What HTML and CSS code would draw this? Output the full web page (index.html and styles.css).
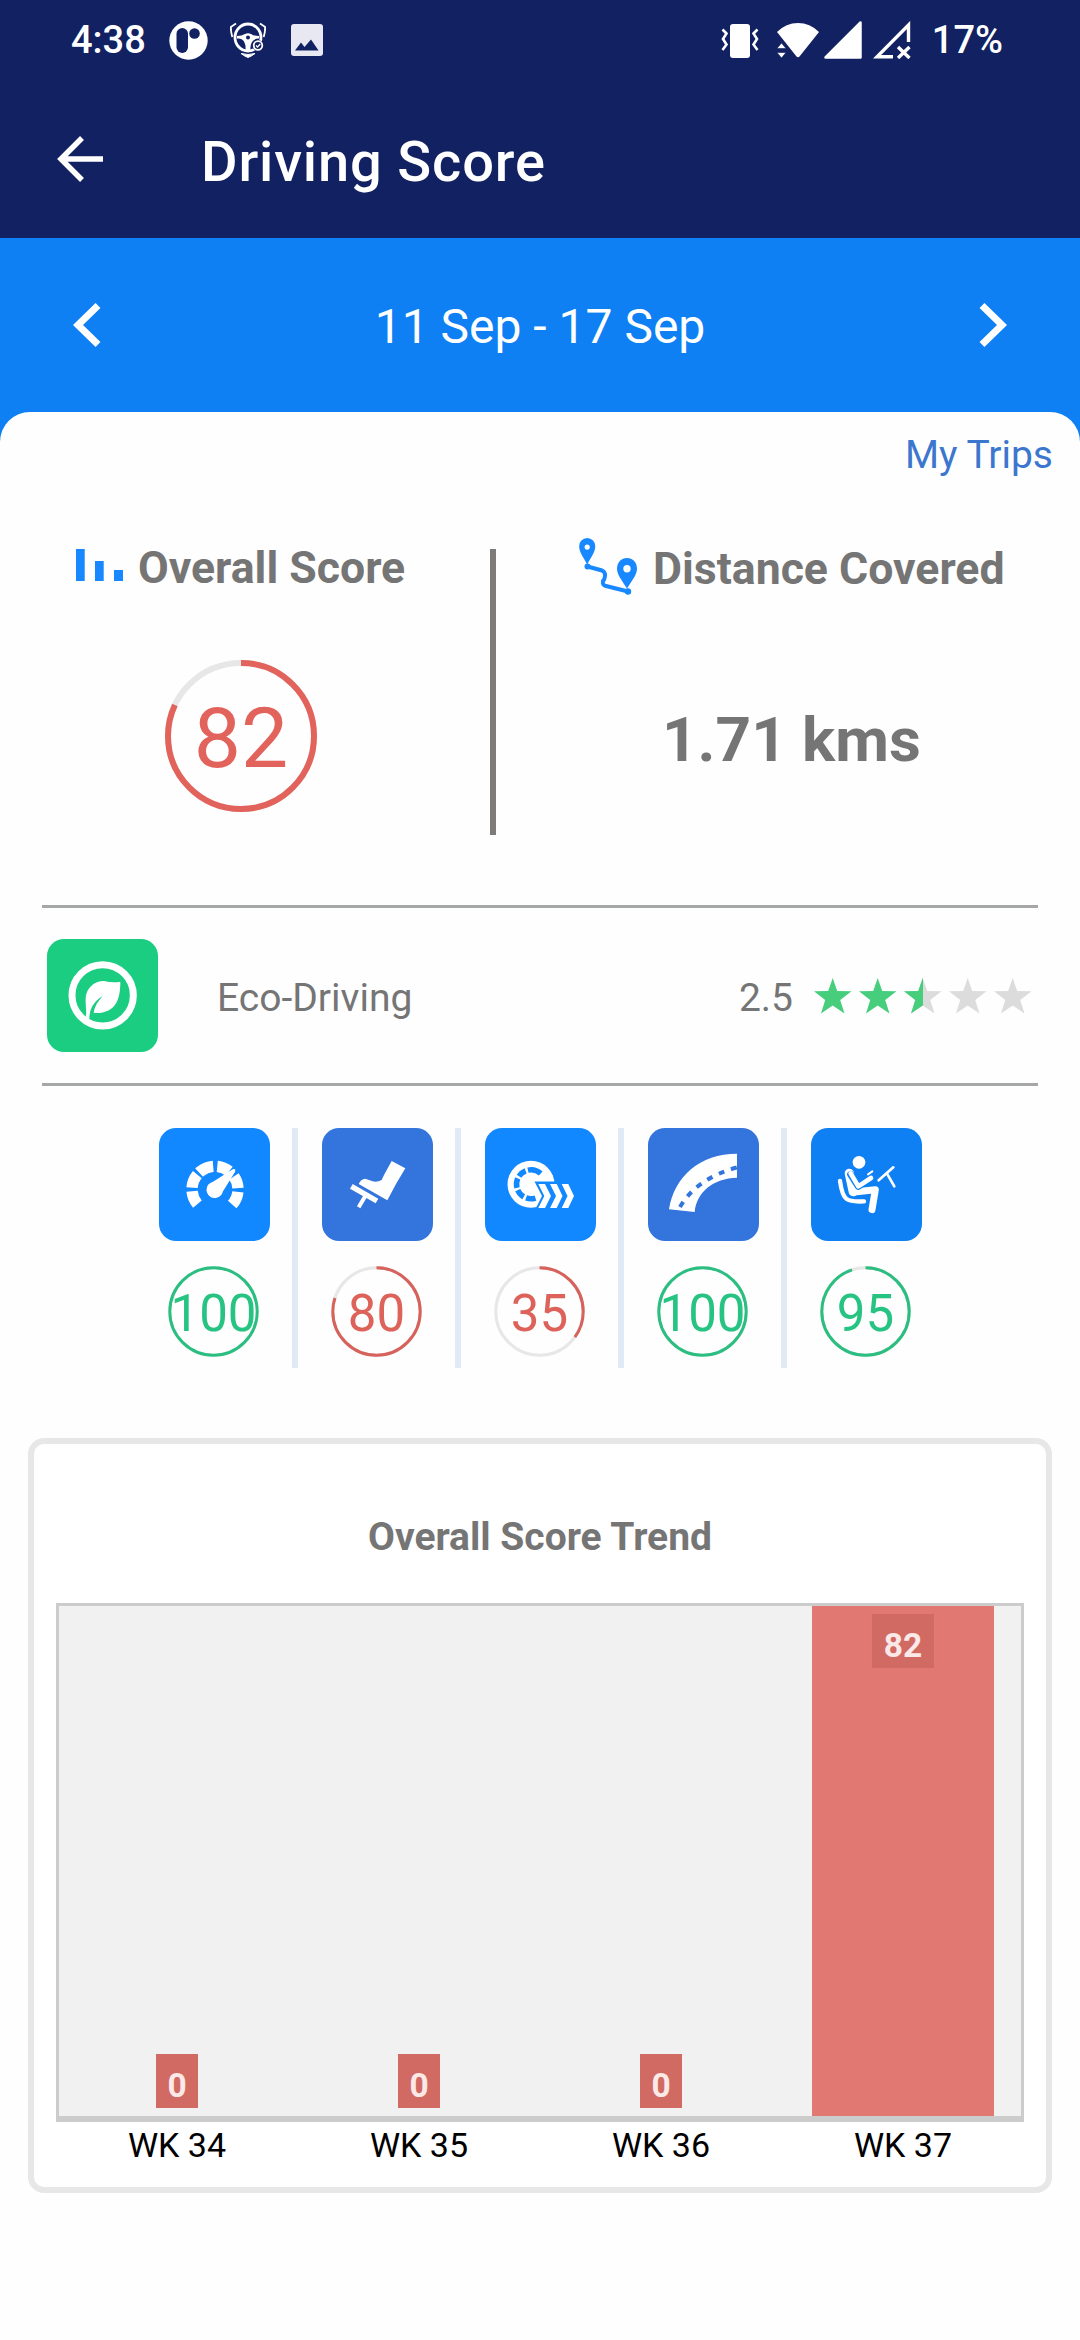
FILE: index.html
```html
<!DOCTYPE html>
<html lang="en">
<head>
<meta charset="utf-8">
<title>Driving Score</title>
<link rel="stylesheet" href="styles.css">
</head>
<body>
<header class="top">
  <div class="status">
    <span class="clock">4:38</span>
    <svg class="st-app" width="39" height="39" viewBox="0 0 39 39"><circle cx="19.5" cy="19.5" r="19.2" fill="#fff"/><rect x="7.5" y="7" width="11.5" height="25" rx="5.75" fill="#122161"/><circle cx="25.5" cy="12.5" r="5.3" fill="#122161"/></svg>
    <svg class="st-shield" width="36" height="36" viewBox="0 0 36 36" fill="none" stroke="#fff"><path d="M6 1.500 0.800 5q0 5 1.500 10M30 1.500 35.200 5q0 5-1.500 10" stroke-width="1.800"/><path d="M11 31.500q4 3 7 4 3-1 7-4-7 2-14 0z" fill="#fff" stroke-width="1"/><ellipse cx="18" cy="15.500" rx="13" ry="13.500" stroke-width="2.800"/><path d="M7 14Q12 14 15 12q3-1.500 6 0 3 2 8 2v2.500q-5 0-7 3.500T20.500 28h-5Q16 23 14 19.500T7 16.500z" fill="#fff" stroke="none"/><circle cx="18" cy="15.500" r="2" fill="#122161" stroke="none"/><circle cx="28" cy="23.500" r="5.500" fill="#122161" stroke="none"/><circle cx="28" cy="23.500" r="4.300" stroke-width="1.800"/><path d="m26 23.500 1.500 1.500 2.800-3" stroke-width="1.300"/></svg>
    <svg class="st-image" width="32" height="32" viewBox="0 0 32 32"><rect width="32" height="32" rx="3" fill="#e8e8f3"/><path d="M4 26.500 10 18.500l3.500 4.500 6.500-7.500 7.500 11z" fill="#122161"/></svg>
    <span class="status-gap"></span>
    <svg class="st-vib" width="38" height="34" viewBox="0 0 38 34"><rect x="9" width="20" height="34" rx="3" fill="#fff"/><path d="M1.500 5.500 5.500 9.500 2 15 5.500 20.500 1.500 26M36.500 5.500 32.500 9.500 36 15 32.500 20.500 36.500 26" fill="none" stroke="#fff" stroke-width="2.600"/></svg>
    <svg class="st-wifi" width="42" height="35" viewBox="0 0 42 35" fill="#fff"><path d="M0 9Q9 0 21 0t21 9L22.500 33.500q-1.500 1.500-3 0L8 19z"/><path d="M0 25.500 4.500 20 9 25.500zM0 29.500h9L4.500 35z" stroke="#122161" stroke-width=".6"/></svg>
    <svg class="st-sig" width="38" height="38" viewBox="0 0 38 38"><path d="M1.500 36.500 36.500 1.500v35z" fill="#fff" stroke="#fff" stroke-width="2.500" stroke-linejoin="round"/></svg>
    <svg class="st-sigx" width="38" height="38" viewBox="0 0 38 38" fill="none" stroke="#fff" stroke-width="3.400"><path d="M20 35.800H4L35.500 4v17M25 26 36.500 37M36.500 26 25 37"/></svg>
    <span class="battery">17%</span>
  </div>
  <div class="appbar">
    <svg class="back" width="46" height="46" viewBox="0 0 46 46" fill="none" stroke="#fff" stroke-width="5.500"><path d="M25 2 4 23l21 21M4 23h42"/></svg>
    <h1 class="title">Driving Score</h1>
  </div>
</header>

<section class="week">
  <svg width="28" height="44" viewBox="0 0 28 44" fill="none" stroke="#fff" stroke-width="7"><path d="M25 2.500 5 22l20 19.500"/></svg>
  <span class="range">11 Sep - 17 Sep</span>
  <svg width="28" height="44" viewBox="0 0 28 44" fill="none" stroke="#fff" stroke-width="7"><path d="M3 2.500 23 22 3 41.500"/></svg>
</section>

<main class="sheet">
  <a class="trips">My Trips</a>

  <section class="summary">
    <div class="overall">
      <h2 class="heading">
        <svg class="bars" width="47" height="32" viewBox="0 0 47 32" fill="#1788ff"><path d="M0 0h8.700v32H0zM19 12h8.700v20H19zM38 21h9v11h-9z"/></svg>
        Overall Score
      </h2>
      <div class="ring ring-big">
        <svg width="152" height="152" viewBox="0 0 152 152"><circle cx="76" cy="76" r="73" class="track"/><circle cx="76" cy="76" r="73" pathLength="100" stroke-dasharray="82 18" class="arc red"/></svg>
        <span class="ring-num">82</span>
      </div>
    </div>
    <div class="vline"></div>
    <div class="distance">
      <h2 class="heading heading-r">
        <svg class="route" width="59" height="57" viewBox="0 0 59 57" fill="#1788ff"><path fill-rule="evenodd" d="M8.200 0a8 8 0 0 1 8 8.500c0 5-3 9-8 18-5-9-8-13-8-18a8 8 0 0 1 8-8.500zm0 6.500a2.600 2.600 0 1 0 0 5.200 2.600 2.600 0 0 0 0-5.200zM48 20a10 10 0 0 1 10 10.500c0 6-4 10.500-10 20-6-9.500-10-14-10-20A10 10 0 0 1 48 20zm0 7a3.700 3.700 0 1 0 0 7.400 3.700 3.700 0 0 0 0-7.400z"/><circle cx="8.500" cy="28.500" r="3"/><circle cx="49" cy="53.500" r="3.200"/><path d="M8.500 28.500 23 32.500Q26.500 34 26 38T24 43q-1 4 3 5L49 53.500" fill="none" stroke="#1788ff" stroke-width="4"/></svg>
        Distance Covered
      </h2>
      <p class="kms">1.71 kms</p>
    </div>
  </section>

  <section class="eco">
    <svg class="tile" viewBox="81 147 333 339"><rect x="81" y="147" width="333" height="339" rx="51" fill="#1acd81"/><circle cx="248" cy="316" r="92" fill="none" stroke="#fff" stroke-width="21"/><path d="M301 275C301 325 290 372 221 369 224 348 234 334 248 318 220 335 207 358 208 392L197 384C201 365 196 350 197 325 198 295 222 273 252 273Q278 279 301 275z" fill="#fff"/></svg>
    <span class="eco-name">Eco-Driving</span>
    <span class="eco-value">2.5</span>
    <svg class="stars" width="218" height="36" viewBox="0 0 218 36">
      <defs><path id="star" d="M18.700 0 23.200 13 37.500 13.300 26.200 22 30.500 35.500 18.700 27.500 7 35.500 11.200 22 0 13.300 14.200 13z"/><clipPath id="half"><rect width="19" height="36"/></clipPath></defs>
      <g fill="#46ce7d"><use href="#star"/><use href="#star" x="45"/></g>
      <g fill="#dcdcdc"><use href="#star" x="90"/><use href="#star" x="135"/><use href="#star" x="180"/></g>
      <g transform="translate(90 0)" fill="#46ce7d"><use href="#star" clip-path="url(#half)"/></g>
    </svg>
  </section>

  <section class="metrics">
    <div class="metric">
      <svg class="tile" viewBox="57 54 333 339"><rect x="57" y="54" width="333" height="339" rx="51" fill="#1188ff"/><circle cx="225" cy="238" r="69" pathLength="360" fill="none" stroke="#fff" stroke-width="34" stroke-dasharray="35 9 35 7 39 10 32 18 31 9 35 100" transform="rotate(-220 225 238)"/><path d="M276 179q5-4 9-1 2 3 0 8l-36 58a25 25 0 1 1-30-29z" fill="#fff"/></svg>
      <div class="ring"><svg width="91" height="91" viewBox="0 0 91 91"><circle cx="45.500" cy="45.500" r="43.700" class="arc green"/></svg><span class="ring-num green-t">100</span></div>
    </div>
    <div class="sep"></div>
    <div class="metric">
      <svg class="tile" viewBox="546 54 333 339"><rect x="546" y="54" width="333" height="339" rx="51" fill="#3375dc"/><path d="M755 153 796 175 768 222 742 271 656 222Q662 207 676 206L698 214Q712 217 725 210L732 195z" fill="#fff"/><path d="M634 229 711 273" stroke="#fff" stroke-width="16"/><path d="M676 258 656 292" stroke="#fff" stroke-width="12"/></svg>
      <div class="ring"><svg width="91" height="91" viewBox="0 0 91 91"><circle cx="45.500" cy="45.500" r="43.700" class="track"/><circle cx="45.500" cy="45.500" r="43.700" pathLength="100" stroke-dasharray="80 20" class="arc red2"/></svg><span class="ring-num red2-t">80</span></div>
    </div>
    <div class="sep"></div>
    <div class="metric">
      <svg class="tile" viewBox="0 0 111 113"><rect width="111" height="113" rx="17" fill="#1188ff"/><circle cx="46" cy="56.300" r="23.500" fill="#fff"/><circle cx="46" cy="56.300" r="14.500" fill="none" stroke="#1188ff" stroke-width="5.500" pathLength="360" stroke-dasharray="38 10 36 10 38 10 34 10 54 120" transform="rotate(72 46 56.300)"/><path d="M49.500 53.500H72V82H50L57 68z" fill="#1188ff"/><g fill="#fff"><path d="M53.300 56H60L66 68 60 80H53.300L59.300 68zM65 56H71.700L77.500 68 71.700 80H65L71 68zM76.700 56H83.300L89 68 83.300 80H76.700L82.500 68z"/></g></svg>
      <div class="ring"><svg width="91" height="91" viewBox="0 0 91 91"><circle cx="45.500" cy="45.500" r="43.700" class="track"/><circle cx="45.500" cy="45.500" r="43.700" pathLength="100" stroke-dasharray="35 65" class="arc red2"/></svg><span class="ring-num red2-t">35</span></div>
    </div>
    <div class="sep"></div>
    <div class="metric">
      <svg class="tile" viewBox="354 54 333 339"><rect x="354" y="54" width="333" height="339" rx="51" fill="#3375dc"/><path d="M417 298C432 200 510 131 621 131V203C550 205 500 245 494 306z" fill="#fff"/><path d="M450 291Q500 205 622 172" fill="none" stroke="#3375dc" stroke-width="12" stroke-dasharray="18 21"/></svg>
      <div class="ring"><svg width="91" height="91" viewBox="0 0 91 91"><circle cx="45.500" cy="45.500" r="43.700" class="arc green"/></svg><span class="ring-num green-t">100</span></div>
    </div>
    <div class="sep"></div>
    <div class="metric">
      <svg class="tile" viewBox="843 54 333 339"><rect x="843" y="54" width="333" height="339" rx="51" fill="#0e80f4"/><circle cx="987" cy="157" r="19" fill="#fff"/><g fill="none" stroke="#fff" stroke-linecap="round" stroke-linejoin="round"><path d="M930 213C938 272 950 277 1002 274" stroke-width="13"/><path d="M958 190 970 245" stroke-width="28"/><path d="M972 246 1036 239 1026 299" stroke-width="21"/><path d="M962 193 985 229 1023 204" stroke="#0e80f4" stroke-width="21"/><path d="M962 190 985 229 1023 204" stroke-width="14"/><path d="M1014 193 1027 184" stroke-width="6"/><path d="M1046 211 1090 172M1071 191 1093 229" stroke-width="8"/></g></svg>
      <div class="ring"><svg width="91" height="91" viewBox="0 0 91 91"><circle cx="45.500" cy="45.500" r="43.700" class="track"/><circle cx="45.500" cy="45.500" r="43.700" pathLength="100" stroke-dasharray="95 5" class="arc green"/></svg><span class="ring-num green-t">95</span></div>
    </div>
  </section>

  <section class="trend">
    <h3 class="trend-title">Overall Score Trend</h3>
    <div class="plot">
      <div class="col"><span class="tag">0</span></div>
      <div class="col"><span class="tag">0</span></div>
      <div class="col"><span class="tag">0</span></div>
      <div class="col"><div class="bar"><span class="tag tag-in">82</span></div></div>
    </div>
    <div class="weeks"><span>WK 34</span><span>WK 35</span><span>WK 36</span><span>WK 37</span></div>
  </section>
</main>
</body>
</html>
```
FILE: styles.css
```css
* { box-sizing: border-box; }
body {
  margin: 0;
  width: 1080px;
  height: 2340px;
  overflow: hidden;
  background: #0e80f4;
  font-family: Roboto, "Liberation Sans", sans-serif;
  color: #757575;
}
svg { display: block; flex: none; }
h1, h2, h3, p { margin: 0; }

.top { height: 238px; background: #122161; color: #fff; }
.status {
  display: flex;
  align-items: center;
  height: 80px;
  padding: 0 77px 0 71px;
  font-size: 38px;
  font-weight: 500;
}
.clock { width: 98px; white-space: nowrap; }
.st-app { margin-right: 22px; }
.st-shield { margin-right: 25px; }
.status-gap { flex: 1; }
.st-vib { margin: 2px 18px 0 0; }
.st-wifi { margin-right: 5px; }
.st-sig { margin-right: 11px; }
.st-sigx { margin-right: 21px; }
.appbar {
  display: flex;
  align-items: center;
  height: 158px;
  padding: 0 57px;
}
.back { margin-right: 98px; }
.title { font-size: 56px; font-weight: 500; line-height: 158px; letter-spacing: 0.85px; padding-top: 5px; white-space: nowrap; }

.week {
  display: flex;
  align-items: center;
  justify-content: space-between;
  height: 174px;
  padding: 0 73px;
  color: #fff;
}
.range { font-size: 48px; line-height: 60px; padding-top: 3px; }

.sheet {
  height: 1928px;
  border-radius: 30px 30px 0 0;
  background: #fefefe;
}
.trips {
  display: block;
  height: 137px;
  padding: 20px 27px 0 0;
  text-align: right;
  font-size: 39px;
  line-height: 46px;
  color: #3b76cf;
}

.summary { display: flex; height: 356px; }
.overall { width: 490px; padding-left: 76px; }
.heading { display: flex; align-items: flex-start; height: 111px; font-size: 44.6px; line-height: 38px; font-weight: 700; white-space: nowrap; }
.bars { margin-right: 15px; }
.vline { width: 6px; height: 286px; background: #7f7b7b; }
.distance { padding-left: 83px; }
.heading-r { line-height: 40px; }
.route { margin: -11px 15px 0 0; }
.kms { padding: 43px 0 0 83px; font-size: 62px; line-height: 74px; font-weight: 700; white-space: nowrap; }

.ring { display: grid; width: 91px; height: 91px; place-items: center; }
.ring > * { grid-area: 1 / 1; }
.ring-num { font-size: 51px; line-height: 60px; white-space: nowrap; padding-top: 5px; }
.ring-big { width: 152px; height: 152px; margin-left: 89px; }
.ring-big .ring-num { font-size: 84px; line-height: 100px; padding-top: 6px; color: #e2635b; }
.ring circle { fill: none; stroke-width: 3; }
.ring-big circle { stroke-width: 6; }
.ring .track { stroke: #e7e7e7; }
.arc { transform: rotate(-90deg); transform-origin: center; }
.ring .red { stroke: #e2635b; }
.ring .red2 { stroke: #d7625c; }
.ring .green { stroke: #2cbd80; }
.red2-t { color: #dc625a; }
.green-t { color: #26c382; }

.eco {
  display: flex;
  align-items: center;
  height: 181px;
  margin: 0 42px;
  padding: 0 6px 0 5px;
  border: solid #a6a8a8;
  border-width: 3px 0;
  font-size: 39px;
}
.tile { width: 111px; height: 113px; }
.eco-name { margin: 5px auto 0 59px; }
.eco-value { margin: 5px 21px 0 0; }

.metrics { display: flex; height: 240px; margin: 42px 0 0 159px; }
.metric { width: 111px; }
.metric .ring { margin: 25px 0 0 9px; }
.sep { width: 6px; height: 240px; margin: 0 24px 0 22px; background: #e1e9f4; }

.trend {
  width: 1024px;
  height: 755px;
  margin: 70px 0 0 28px;
  padding: 0 22px;
  border: 6px solid #e7e7e7;
  border-radius: 16px;
  background: #fff;
}
.trend-title { height: 159px; padding-top: 70px; text-align: center; font-size: 39px; line-height: 46px; font-weight: 700; }
.plot {
  display: flex;
  height: 519px;
  border: 3px solid #ccc;
  border-bottom-width: 6px;
  background: #f1f1f1;
}
.col { display: flex; flex: 1; align-items: flex-end; justify-content: center; }
/* The columns span the plot's full width, borders included, so they line up with the week labels. */
.col:first-child { margin-left: -3px; }
.col:last-child { margin-right: -3px; }
.bar { display: flex; justify-content: center; width: 182px; height: 100%; background: #e27872; }
.tag {
  height: 54px;
  margin-bottom: 8px;
  padding: 0 11.5px;
  font-size: 33.5px;
  line-height: 63px;
  font-weight: 700;
  color: #fbe9e8;
  background: #d26a64;
}
.tag-in { margin: 8px 0 0; }
.weeks { display: flex; font-size: 34px; line-height: 40px; color: #000; padding-top: 3px; }
.weeks span { flex: 1; text-align: center; }
```
